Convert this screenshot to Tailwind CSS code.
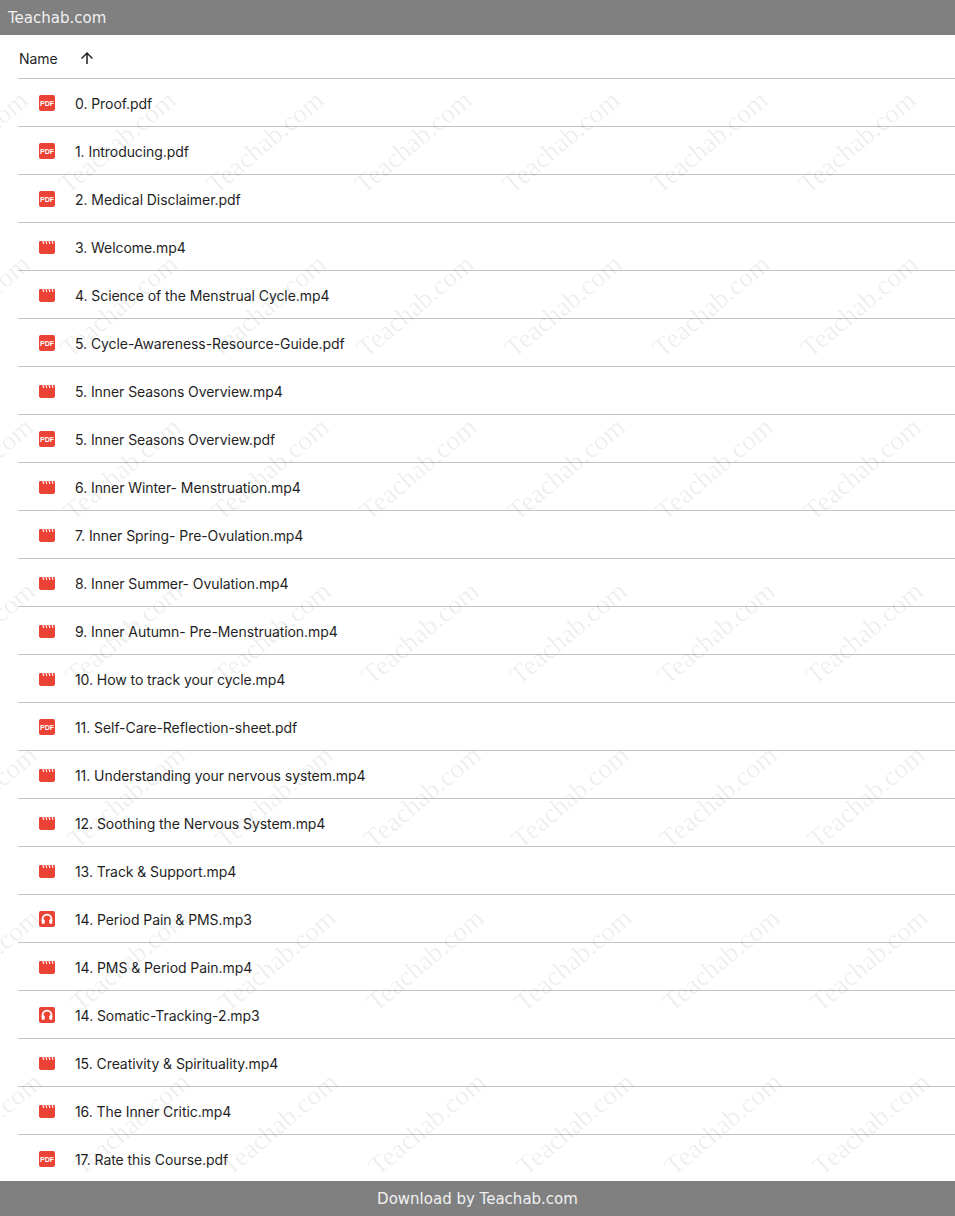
<!doctype html>
<html lang="en">
<head>
<meta charset="utf-8">
<title>Teachab.com</title>
<script src="https://cdn.jsdelivr.net/npm/@tailwindcss/browser@4"></script>
</head>
<body class="relative h-screen overflow-hidden bg-white flex flex-col font-['Inter',sans-serif]">
<header class="h-[35px] shrink-0 bg-[#808080] pl-2 pt-px flex items-center text-[#f0f0f0] text-[15px] font-['DejaVu_Sans',sans-serif]">Teachab.com</header>
<main class="flex-1 min-h-0 overflow-hidden pl-[18px] text-[14px] text-[#1f1f1f] tracking-[-0.07px]">
  <div class="h-[44px] pt-[4px] flex items-center border-b border-[#c4c4c4]">
    <span class="ml-px">Name</span>
    <svg class="ml-[20px] -mt-[2px]" width="18" height="18" viewBox="0 0 24 24" fill="#1f1f1f"><path d="M11 20V7.800l-5.600 5.600L4 12l8-8 8 8-1.400 1.400L13 7.800V20z"/></svg>
  </div>
  <ul>
    <li class="h-[48px] pt-px flex items-center border-b border-[#c4c4c4]"><svg class="ml-[21px] mr-[20px] shrink-0" width="16" height="16" viewBox="0 0 16 16"><rect width="16" height="16" rx="2" fill="#ea4335"/><text x="8" y="10.5" text-anchor="middle" font-size="7" font-weight="700" font-family="Liberation Sans" fill="#fff">PDF</text></svg><span>0. Proof.pdf</span></li>
    <li class="h-[48px] pt-px flex items-center border-b border-[#c4c4c4]"><svg class="ml-[21px] mr-[20px] shrink-0" width="16" height="16" viewBox="0 0 16 16"><rect width="16" height="16" rx="2" fill="#ea4335"/><text x="8" y="10.5" text-anchor="middle" font-size="7" font-weight="700" font-family="Liberation Sans" fill="#fff">PDF</text></svg><span>1. Introducing.pdf</span></li>
    <li class="h-[48px] pt-px flex items-center border-b border-[#c4c4c4]"><svg class="ml-[21px] mr-[20px] shrink-0" width="16" height="16" viewBox="0 0 16 16"><rect width="16" height="16" rx="2" fill="#ea4335"/><text x="8" y="10.5" text-anchor="middle" font-size="7" font-weight="700" font-family="Liberation Sans" fill="#fff">PDF</text></svg><span>2. Medical Disclaimer.pdf</span></li>
    <li class="h-[48px] pt-px flex items-center border-b border-[#c4c4c4]"><svg class="ml-[21px] mr-[20px] shrink-0" width="16" height="16" viewBox="0 0 16 16"><path fill="#ea4335" d="M1 2h14l1 1v10.500L14.500 15h-13L0 13.500V3z"/><path stroke="#fff" stroke-width="1.100" d="M3.700 1.500l1 3.300M6.800 1.500l1 3.300M9.900 1.500l1 3.300M13 1.500l1 3.300"/></svg><span>3. Welcome.mp4</span></li>
    <li class="h-[48px] pt-px flex items-center border-b border-[#c4c4c4]"><svg class="ml-[21px] mr-[20px] shrink-0" width="16" height="16" viewBox="0 0 16 16"><path fill="#ea4335" d="M1 2h14l1 1v10.500L14.500 15h-13L0 13.500V3z"/><path stroke="#fff" stroke-width="1.100" d="M3.700 1.500l1 3.300M6.800 1.500l1 3.300M9.900 1.500l1 3.300M13 1.500l1 3.300"/></svg><span>4. Science of the Menstrual Cycle.mp4</span></li>
    <li class="h-[48px] pt-px flex items-center border-b border-[#c4c4c4]"><svg class="ml-[21px] mr-[20px] shrink-0" width="16" height="16" viewBox="0 0 16 16"><rect width="16" height="16" rx="2" fill="#ea4335"/><text x="8" y="10.5" text-anchor="middle" font-size="7" font-weight="700" font-family="Liberation Sans" fill="#fff">PDF</text></svg><span>5. Cycle-Awareness-Resource-Guide.pdf</span></li>
    <li class="h-[48px] pt-px flex items-center border-b border-[#c4c4c4]"><svg class="ml-[21px] mr-[20px] shrink-0" width="16" height="16" viewBox="0 0 16 16"><path fill="#ea4335" d="M1 2h14l1 1v10.500L14.500 15h-13L0 13.500V3z"/><path stroke="#fff" stroke-width="1.100" d="M3.700 1.500l1 3.300M6.800 1.500l1 3.300M9.900 1.500l1 3.300M13 1.500l1 3.300"/></svg><span>5. Inner Seasons Overview.mp4</span></li>
    <li class="h-[48px] pt-px flex items-center border-b border-[#c4c4c4]"><svg class="ml-[21px] mr-[20px] shrink-0" width="16" height="16" viewBox="0 0 16 16"><rect width="16" height="16" rx="2" fill="#ea4335"/><text x="8" y="10.5" text-anchor="middle" font-size="7" font-weight="700" font-family="Liberation Sans" fill="#fff">PDF</text></svg><span>5. Inner Seasons Overview.pdf</span></li>
    <li class="h-[48px] pt-px flex items-center border-b border-[#c4c4c4]"><svg class="ml-[21px] mr-[20px] shrink-0" width="16" height="16" viewBox="0 0 16 16"><path fill="#ea4335" d="M1 2h14l1 1v10.500L14.500 15h-13L0 13.500V3z"/><path stroke="#fff" stroke-width="1.100" d="M3.700 1.500l1 3.300M6.800 1.500l1 3.300M9.900 1.500l1 3.300M13 1.500l1 3.300"/></svg><span>6. Inner Winter- Menstruation.mp4</span></li>
    <li class="h-[48px] pt-px flex items-center border-b border-[#c4c4c4]"><svg class="ml-[21px] mr-[20px] shrink-0" width="16" height="16" viewBox="0 0 16 16"><path fill="#ea4335" d="M1 2h14l1 1v10.500L14.500 15h-13L0 13.500V3z"/><path stroke="#fff" stroke-width="1.100" d="M3.700 1.500l1 3.300M6.800 1.500l1 3.300M9.900 1.500l1 3.300M13 1.500l1 3.300"/></svg><span>7. Inner Spring- Pre-Ovulation.mp4</span></li>
    <li class="h-[48px] pt-px flex items-center border-b border-[#c4c4c4]"><svg class="ml-[21px] mr-[20px] shrink-0" width="16" height="16" viewBox="0 0 16 16"><path fill="#ea4335" d="M1 2h14l1 1v10.500L14.500 15h-13L0 13.500V3z"/><path stroke="#fff" stroke-width="1.100" d="M3.700 1.500l1 3.300M6.800 1.500l1 3.300M9.900 1.500l1 3.300M13 1.500l1 3.300"/></svg><span>8. Inner Summer- Ovulation.mp4</span></li>
    <li class="h-[48px] pt-px flex items-center border-b border-[#c4c4c4]"><svg class="ml-[21px] mr-[20px] shrink-0" width="16" height="16" viewBox="0 0 16 16"><path fill="#ea4335" d="M1 2h14l1 1v10.500L14.500 15h-13L0 13.500V3z"/><path stroke="#fff" stroke-width="1.100" d="M3.700 1.500l1 3.300M6.800 1.500l1 3.300M9.900 1.500l1 3.300M13 1.500l1 3.300"/></svg><span>9. Inner Autumn- Pre-Menstruation.mp4</span></li>
    <li class="h-[48px] pt-px flex items-center border-b border-[#c4c4c4]"><svg class="ml-[21px] mr-[20px] shrink-0" width="16" height="16" viewBox="0 0 16 16"><path fill="#ea4335" d="M1 2h14l1 1v10.500L14.500 15h-13L0 13.500V3z"/><path stroke="#fff" stroke-width="1.100" d="M3.700 1.500l1 3.300M6.800 1.500l1 3.300M9.900 1.500l1 3.300M13 1.500l1 3.300"/></svg><span>10. How to track your cycle.mp4</span></li>
    <li class="h-[48px] pt-px flex items-center border-b border-[#c4c4c4]"><svg class="ml-[21px] mr-[20px] shrink-0" width="16" height="16" viewBox="0 0 16 16"><rect width="16" height="16" rx="2" fill="#ea4335"/><text x="8" y="10.5" text-anchor="middle" font-size="7" font-weight="700" font-family="Liberation Sans" fill="#fff">PDF</text></svg><span>11. Self-Care-Reflection-sheet.pdf</span></li>
    <li class="h-[48px] pt-px flex items-center border-b border-[#c4c4c4]"><svg class="ml-[21px] mr-[20px] shrink-0" width="16" height="16" viewBox="0 0 16 16"><path fill="#ea4335" d="M1 2h14l1 1v10.500L14.500 15h-13L0 13.500V3z"/><path stroke="#fff" stroke-width="1.100" d="M3.700 1.500l1 3.300M6.800 1.500l1 3.300M9.900 1.500l1 3.300M13 1.500l1 3.300"/></svg><span>11. Understanding your nervous system.mp4</span></li>
    <li class="h-[48px] pt-px flex items-center border-b border-[#c4c4c4]"><svg class="ml-[21px] mr-[20px] shrink-0" width="16" height="16" viewBox="0 0 16 16"><path fill="#ea4335" d="M1 2h14l1 1v10.500L14.500 15h-13L0 13.500V3z"/><path stroke="#fff" stroke-width="1.100" d="M3.700 1.500l1 3.300M6.800 1.500l1 3.300M9.900 1.500l1 3.300M13 1.500l1 3.300"/></svg><span>12. Soothing the Nervous System.mp4</span></li>
    <li class="h-[48px] pt-px flex items-center border-b border-[#c4c4c4]"><svg class="ml-[21px] mr-[20px] shrink-0" width="16" height="16" viewBox="0 0 16 16"><path fill="#ea4335" d="M1 2h14l1 1v10.500L14.500 15h-13L0 13.500V3z"/><path stroke="#fff" stroke-width="1.100" d="M3.700 1.500l1 3.300M6.800 1.500l1 3.300M9.900 1.500l1 3.300M13 1.500l1 3.300"/></svg><span>13. Track &amp; Support.mp4</span></li>
    <li class="h-[48px] pt-px flex items-center border-b border-[#c4c4c4]"><svg class="ml-[21px] mr-[20px] shrink-0" width="16" height="16" viewBox="0 0 16 16"><rect width="16" height="16" rx="2" fill="#ea4335"/><path fill="none" stroke="#fff" stroke-width="1.800" d="M3.600 10V8a4.400 4.400 0 0 1 8.800 0V10"/><rect x="2.700" y="8.500" width="3" height="4.200" rx=".8" fill="#fff"/><rect x="10.300" y="8.500" width="3" height="4.200" rx=".8" fill="#fff"/></svg><span>14. Period Pain &amp; PMS.mp3</span></li>
    <li class="h-[48px] pt-px flex items-center border-b border-[#c4c4c4]"><svg class="ml-[21px] mr-[20px] shrink-0" width="16" height="16" viewBox="0 0 16 16"><path fill="#ea4335" d="M1 2h14l1 1v10.500L14.500 15h-13L0 13.500V3z"/><path stroke="#fff" stroke-width="1.100" d="M3.700 1.500l1 3.300M6.800 1.500l1 3.300M9.900 1.500l1 3.300M13 1.500l1 3.300"/></svg><span>14. PMS &amp; Period Pain.mp4</span></li>
    <li class="h-[48px] pt-px flex items-center border-b border-[#c4c4c4]"><svg class="ml-[21px] mr-[20px] shrink-0" width="16" height="16" viewBox="0 0 16 16"><rect width="16" height="16" rx="2" fill="#ea4335"/><path fill="none" stroke="#fff" stroke-width="1.800" d="M3.600 10V8a4.400 4.400 0 0 1 8.800 0V10"/><rect x="2.700" y="8.500" width="3" height="4.200" rx=".8" fill="#fff"/><rect x="10.300" y="8.500" width="3" height="4.200" rx=".8" fill="#fff"/></svg><span>14. Somatic-Tracking-2.mp3</span></li>
    <li class="h-[48px] pt-px flex items-center border-b border-[#c4c4c4]"><svg class="ml-[21px] mr-[20px] shrink-0" width="16" height="16" viewBox="0 0 16 16"><path fill="#ea4335" d="M1 2h14l1 1v10.500L14.500 15h-13L0 13.500V3z"/><path stroke="#fff" stroke-width="1.100" d="M3.700 1.500l1 3.300M6.800 1.500l1 3.300M9.900 1.500l1 3.300M13 1.500l1 3.300"/></svg><span>15. Creativity &amp; Spirituality.mp4</span></li>
    <li class="h-[48px] pt-px flex items-center border-b border-[#c4c4c4]"><svg class="ml-[21px] mr-[20px] shrink-0" width="16" height="16" viewBox="0 0 16 16"><path fill="#ea4335" d="M1 2h14l1 1v10.500L14.500 15h-13L0 13.500V3z"/><path stroke="#fff" stroke-width="1.100" d="M3.700 1.500l1 3.300M6.800 1.500l1 3.300M9.900 1.500l1 3.300M13 1.500l1 3.300"/></svg><span>16. The Inner Critic.mp4</span></li>
    <li class="h-[48px] pt-px flex items-center border-b border-[#c4c4c4]"><svg class="ml-[21px] mr-[20px] shrink-0" width="16" height="16" viewBox="0 0 16 16"><rect width="16" height="16" rx="2" fill="#ea4335"/><text x="8" y="10.5" text-anchor="middle" font-size="7" font-weight="700" font-family="Liberation Sans" fill="#fff">PDF</text></svg><span>17. Rate this Course.pdf</span></li>
  </ul>
</main>
<footer class="h-[35px] shrink-0 bg-[#808080] pt-px flex items-center justify-center text-[#f0f0f0] text-[15px] font-['DejaVu_Sans',sans-serif]">Download by Teachab.com</footer>
<div aria-hidden="true" class="absolute inset-0 overflow-hidden pointer-events-none font-['Liberation_Serif',serif] text-[27px] text-black/[0.075] leading-none pt-[60px]">
  <div class="flex h-[163.7px] ml-[-105px]"><span class="w-[148px] h-[164px] shrink-0 flex items-center justify-center -rotate-40">Teachab.com</span><span class="w-[148px] h-[164px] shrink-0 flex items-center justify-center -rotate-40">Teachab.com</span><span class="w-[148px] h-[164px] shrink-0 flex items-center justify-center -rotate-40">Teachab.com</span><span class="w-[148px] h-[164px] shrink-0 flex items-center justify-center -rotate-40">Teachab.com</span><span class="w-[148px] h-[164px] shrink-0 flex items-center justify-center -rotate-40">Teachab.com</span><span class="w-[148px] h-[164px] shrink-0 flex items-center justify-center -rotate-40">Teachab.com</span><span class="w-[148px] h-[164px] shrink-0 flex items-center justify-center -rotate-40">Teachab.com</span></div>
  <div class="flex h-[163.7px] ml-[-102.7px]"><span class="w-[148px] h-[164px] shrink-0 flex items-center justify-center -rotate-40">Teachab.com</span><span class="w-[148px] h-[164px] shrink-0 flex items-center justify-center -rotate-40">Teachab.com</span><span class="w-[148px] h-[164px] shrink-0 flex items-center justify-center -rotate-40">Teachab.com</span><span class="w-[148px] h-[164px] shrink-0 flex items-center justify-center -rotate-40">Teachab.com</span><span class="w-[148px] h-[164px] shrink-0 flex items-center justify-center -rotate-40">Teachab.com</span><span class="w-[148px] h-[164px] shrink-0 flex items-center justify-center -rotate-40">Teachab.com</span><span class="w-[148px] h-[164px] shrink-0 flex items-center justify-center -rotate-40">Teachab.com</span></div>
  <div class="flex h-[163.7px] ml-[-100.4px]"><span class="w-[148px] h-[164px] shrink-0 flex items-center justify-center -rotate-40">Teachab.com</span><span class="w-[148px] h-[164px] shrink-0 flex items-center justify-center -rotate-40">Teachab.com</span><span class="w-[148px] h-[164px] shrink-0 flex items-center justify-center -rotate-40">Teachab.com</span><span class="w-[148px] h-[164px] shrink-0 flex items-center justify-center -rotate-40">Teachab.com</span><span class="w-[148px] h-[164px] shrink-0 flex items-center justify-center -rotate-40">Teachab.com</span><span class="w-[148px] h-[164px] shrink-0 flex items-center justify-center -rotate-40">Teachab.com</span><span class="w-[148px] h-[164px] shrink-0 flex items-center justify-center -rotate-40">Teachab.com</span></div>
  <div class="flex h-[163.7px] ml-[-98.1px]"><span class="w-[148px] h-[164px] shrink-0 flex items-center justify-center -rotate-40">Teachab.com</span><span class="w-[148px] h-[164px] shrink-0 flex items-center justify-center -rotate-40">Teachab.com</span><span class="w-[148px] h-[164px] shrink-0 flex items-center justify-center -rotate-40">Teachab.com</span><span class="w-[148px] h-[164px] shrink-0 flex items-center justify-center -rotate-40">Teachab.com</span><span class="w-[148px] h-[164px] shrink-0 flex items-center justify-center -rotate-40">Teachab.com</span><span class="w-[148px] h-[164px] shrink-0 flex items-center justify-center -rotate-40">Teachab.com</span><span class="w-[148px] h-[164px] shrink-0 flex items-center justify-center -rotate-40">Teachab.com</span></div>
  <div class="flex h-[163.7px] ml-[-95.8px]"><span class="w-[148px] h-[164px] shrink-0 flex items-center justify-center -rotate-40">Teachab.com</span><span class="w-[148px] h-[164px] shrink-0 flex items-center justify-center -rotate-40">Teachab.com</span><span class="w-[148px] h-[164px] shrink-0 flex items-center justify-center -rotate-40">Teachab.com</span><span class="w-[148px] h-[164px] shrink-0 flex items-center justify-center -rotate-40">Teachab.com</span><span class="w-[148px] h-[164px] shrink-0 flex items-center justify-center -rotate-40">Teachab.com</span><span class="w-[148px] h-[164px] shrink-0 flex items-center justify-center -rotate-40">Teachab.com</span><span class="w-[148px] h-[164px] shrink-0 flex items-center justify-center -rotate-40">Teachab.com</span></div>
  <div class="flex h-[163.7px] ml-[-93.5px]"><span class="w-[148px] h-[164px] shrink-0 flex items-center justify-center -rotate-40">Teachab.com</span><span class="w-[148px] h-[164px] shrink-0 flex items-center justify-center -rotate-40">Teachab.com</span><span class="w-[148px] h-[164px] shrink-0 flex items-center justify-center -rotate-40">Teachab.com</span><span class="w-[148px] h-[164px] shrink-0 flex items-center justify-center -rotate-40">Teachab.com</span><span class="w-[148px] h-[164px] shrink-0 flex items-center justify-center -rotate-40">Teachab.com</span><span class="w-[148px] h-[164px] shrink-0 flex items-center justify-center -rotate-40">Teachab.com</span><span class="w-[148px] h-[164px] shrink-0 flex items-center justify-center -rotate-40">Teachab.com</span></div>
  <div class="flex h-[163.7px] ml-[-91.2px]"><span class="w-[148px] h-[164px] shrink-0 flex items-center justify-center -rotate-40">Teachab.com</span><span class="w-[148px] h-[164px] shrink-0 flex items-center justify-center -rotate-40">Teachab.com</span><span class="w-[148px] h-[164px] shrink-0 flex items-center justify-center -rotate-40">Teachab.com</span><span class="w-[148px] h-[164px] shrink-0 flex items-center justify-center -rotate-40">Teachab.com</span><span class="w-[148px] h-[164px] shrink-0 flex items-center justify-center -rotate-40">Teachab.com</span><span class="w-[148px] h-[164px] shrink-0 flex items-center justify-center -rotate-40">Teachab.com</span><span class="w-[148px] h-[164px] shrink-0 flex items-center justify-center -rotate-40">Teachab.com</span></div>
</div>
</body>
</html>
